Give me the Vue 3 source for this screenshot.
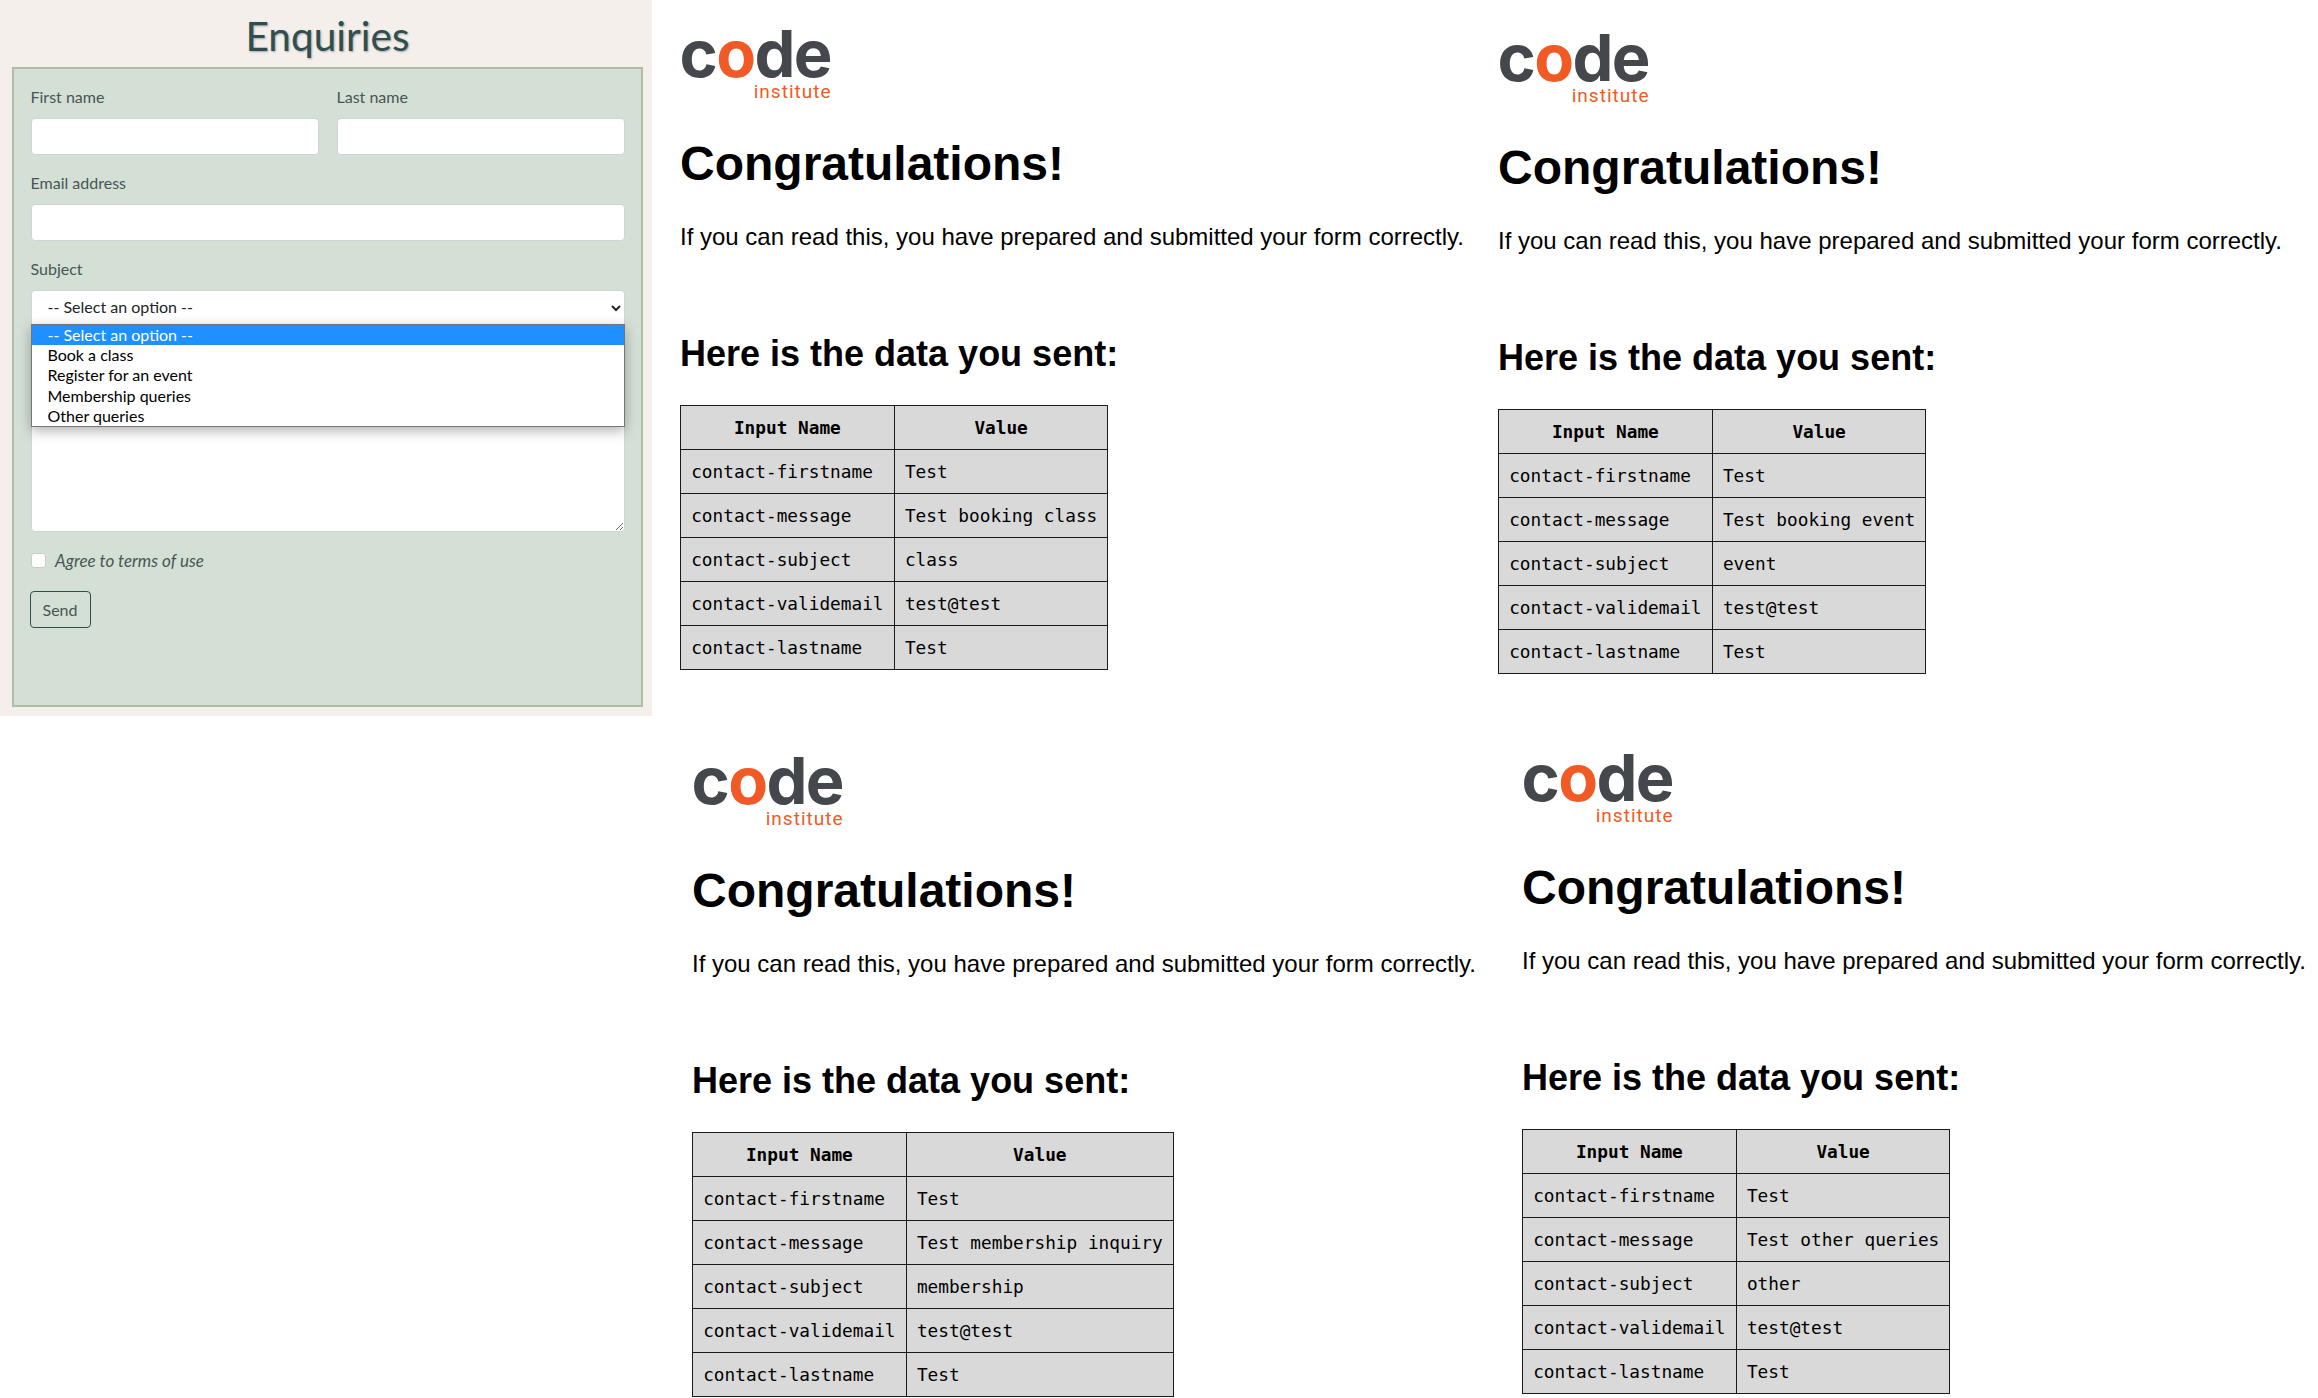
<script setup>
const options = ['-- Select an option --', 'Book a class', 'Register for an event', 'Membership queries', 'Other queries']

const results = [
  { id: 'a', message: 'Test booking class', subject: 'class' },
  { id: 'b', message: 'Test booking event', subject: 'event' },
  { id: 'c', message: 'Test membership inquiry', subject: 'membership' },
  { id: 'd', message: 'Test other queries', subject: 'other' }
]

function rowsFor(r) {
  return [
    ['contact-firstname', 'Test'],
    ['contact-message', r.message],
    ['contact-subject', r.subject],
    ['contact-validemail', 'test@test'],
    ['contact-lastname', 'Test']
  ]
}
</script>

<template>
  <div class="canvas">
    <section class="enquiry">
      <h1 class="enquiry-title">Enquiries</h1>
      <form class="card" @submit.prevent>
        <div class="name-row">
          <div class="group">
            <label class="label">First name</label>
            <input class="field" type="text" />
          </div>
          <div class="group">
            <label class="label">Last name</label>
            <input class="field" type="text" />
          </div>
        </div>
        <div class="group">
          <label class="label">Email address</label>
          <input class="field" type="email" />
        </div>
        <div class="group subject">
          <label class="label">Subject</label>
          <select class="field select">
            <option>{{ options[0] }}</option>
          </select>
          <ul class="dropdown">
            <li v-for="(o, i) in options" :key="o" :class="{ active: i === 0 }">{{ o }}</li>
          </ul>
        </div>
        <textarea class="field message"></textarea>
        <label class="agree">
          <input class="check" type="checkbox" />
          <span>Agree to terms of use</span>
        </label>
        <button class="send" type="button">Send</button>
      </form>
    </section>

    <article v-for="r in results" :key="r.id" class="result" :class="'result-' + r.id">
      <div class="logo">
        <div class="logo-word"><span>c</span><span class="logo-o">o</span><span>de</span></div>
        <div class="logo-sub">institute</div>
      </div>
      <h1 class="congrats">Congratulations!</h1>
      <p class="intro">If you can read this, you have prepared and submitted your form correctly.</p>
      <h2 class="sent">Here is the data you sent:</h2>
      <table class="data">
        <thead>
          <tr><th>Input Name</th><th>Value</th></tr>
        </thead>
        <tbody>
          <tr v-for="row in rowsFor(r)" :key="row[0]">
            <td>{{ row[0] }}</td>
            <td>{{ row[1] }}</td>
          </tr>
        </tbody>
      </table>
    </article>
  </div>
</template>

<style>
html, body {
  margin: 0;
  background: #fff;
}
</style>

<style scoped>
.canvas {
  position: relative;
  width: 2318px;
  height: 1398px;
  overflow: hidden;
  background: #fff;
}

/* enquiry form, top left */
.enquiry {
  position: absolute;
  left: 0;
  top: 0;
  width: 652px;
  height: 716px;
  box-sizing: border-box;
  padding: 0 9px 0 12px;
  background: #f4efeb;
  font-family: Lato, sans-serif;
  font-size: 16px;
  color: #465656;
}

.enquiry-title {
  margin: 0;
  height: 67px;
  font-size: 40.6px;
  font-weight: 400;
  line-height: 72px;
  text-align: center;
  color: #2f4f4f;
  text-shadow: 1px 1px 2px #a8a8a8;
}

.card {
  box-sizing: border-box;
  height: 640px;
  padding: 16px 16.5px 0;
  border: 2px solid #adbea8;
  background: #d4dfd5;
}

.name-row {
  display: grid;
  grid-template-columns: 1fr 1fr;
  gap: 18px;
}

.group {
  margin-bottom: 16.4px;
}

.label {
  display: block;
  margin-bottom: 9px;
  line-height: 24px;
}

.field {
  display: block;
  box-sizing: border-box;
  width: 100%;
  height: 36.6px;
  padding: 6px 12px;
  border: 1px solid #ced4da;
  border-radius: 4px;
  background: #fff;
  font: 16px Lato, sans-serif;
  color: #222;
  outline: none;
}

.subject {
  position: relative;
}

.select {
  padding-top: 3px;
  padding-bottom: 6px;
  color: #212529;
}

.dropdown {
  position: absolute;
  left: 0;
  right: 0;
  top: 67px;
  z-index: 2;
  box-sizing: border-box;
  height: 103px;
  margin: 0;
  padding: 0;
  list-style: none;
  border: 1px solid #767676;
  background: #fff;
  box-shadow: 0 4px 12px rgba(0, 0, 0, 0.3);
  color: #000;
}

.dropdown li {
  height: 20.2px;
  padding-left: 16px;
  line-height: 20.2px;
}

.dropdown li.active {
  background: #1e90ff;
  color: #fff;
}

.message {
  height: 155px;
  margin-top: 50px;
  resize: vertical;
}

.agree {
  display: flex;
  align-items: center;
  gap: 9.5px;
  height: 24px;
  margin-top: 17px;
  font-size: 17px;
  font-style: italic;
}

.check {
  appearance: none;
  width: 15px;
  height: 15px;
  margin: 0;
  border: 1px solid #c9cdcb;
  border-radius: 3px;
  background: #fff;
}

.send {
  display: block;
  width: 61px;
  height: 37.6px;
  margin: 18px 0 0 -1px;
  padding: 0;
  border: 1px solid #2f4f4f;
  border-radius: 4px;
  background: transparent;
  font: 16px Lato, sans-serif;
  color: #465656;
}

/* result pages, pasted around the form */
.result {
  position: absolute;
  font-family: "Liberation Sans", Arial, sans-serif;
  color: #000;
  white-space: nowrap;
}

.result-a { left: 680px; top: 32px; }
.result-b { left: 1498px; top: 36px; }
.result-c { left: 692px; top: 759px; }
.result-d { left: 1522px; top: 756px; }

.logo {
  display: flex;
  flex-direction: column;
  align-items: flex-end;
  width: 150px;
  height: 66px;
}

.logo-word {
  height: 46px;
  margin-top: -1px;
  margin-right: -1px;
  font-family: Inter, sans-serif;
  font-size: 65px;
  font-weight: 700;
  line-height: 46px;
  letter-spacing: -1.6px;
  color: #44474c;
}

.logo-o {
  color: #f15a24;
}

.logo-sub {
  margin-top: 5px;
  margin-right: -1.5px;
  font-family: Roboto, sans-serif;
  font-size: 19px;
  line-height: 20px;
  letter-spacing: 1px;
  color: #f15a24;
}

.congrats {
  margin: 37.5px 0 0;
  font-size: 48px;
  font-weight: 700;
  line-height: 56px;
}

.intro {
  margin: 29px 0 0;
  font-size: 24px;
  line-height: 32px;
}

.sent {
  margin: 80.5px 0 0;
  font-size: 36px;
  font-weight: 700;
  line-height: 42px;
}

.data {
  margin-top: 29.5px;
  border-collapse: collapse;
  background: #d9d9d9;
  font-family: "DejaVu Sans Mono", monospace;
  font-size: 17.75px;
}

.data th,
.data td {
  height: 44px;
  box-sizing: border-box;
  padding: 2px 10.2px 0;
  border: 1px solid #1a1a1a;
  text-align: left;
}

.data th {
  text-align: center;
  font-weight: 700;
}
</style>
